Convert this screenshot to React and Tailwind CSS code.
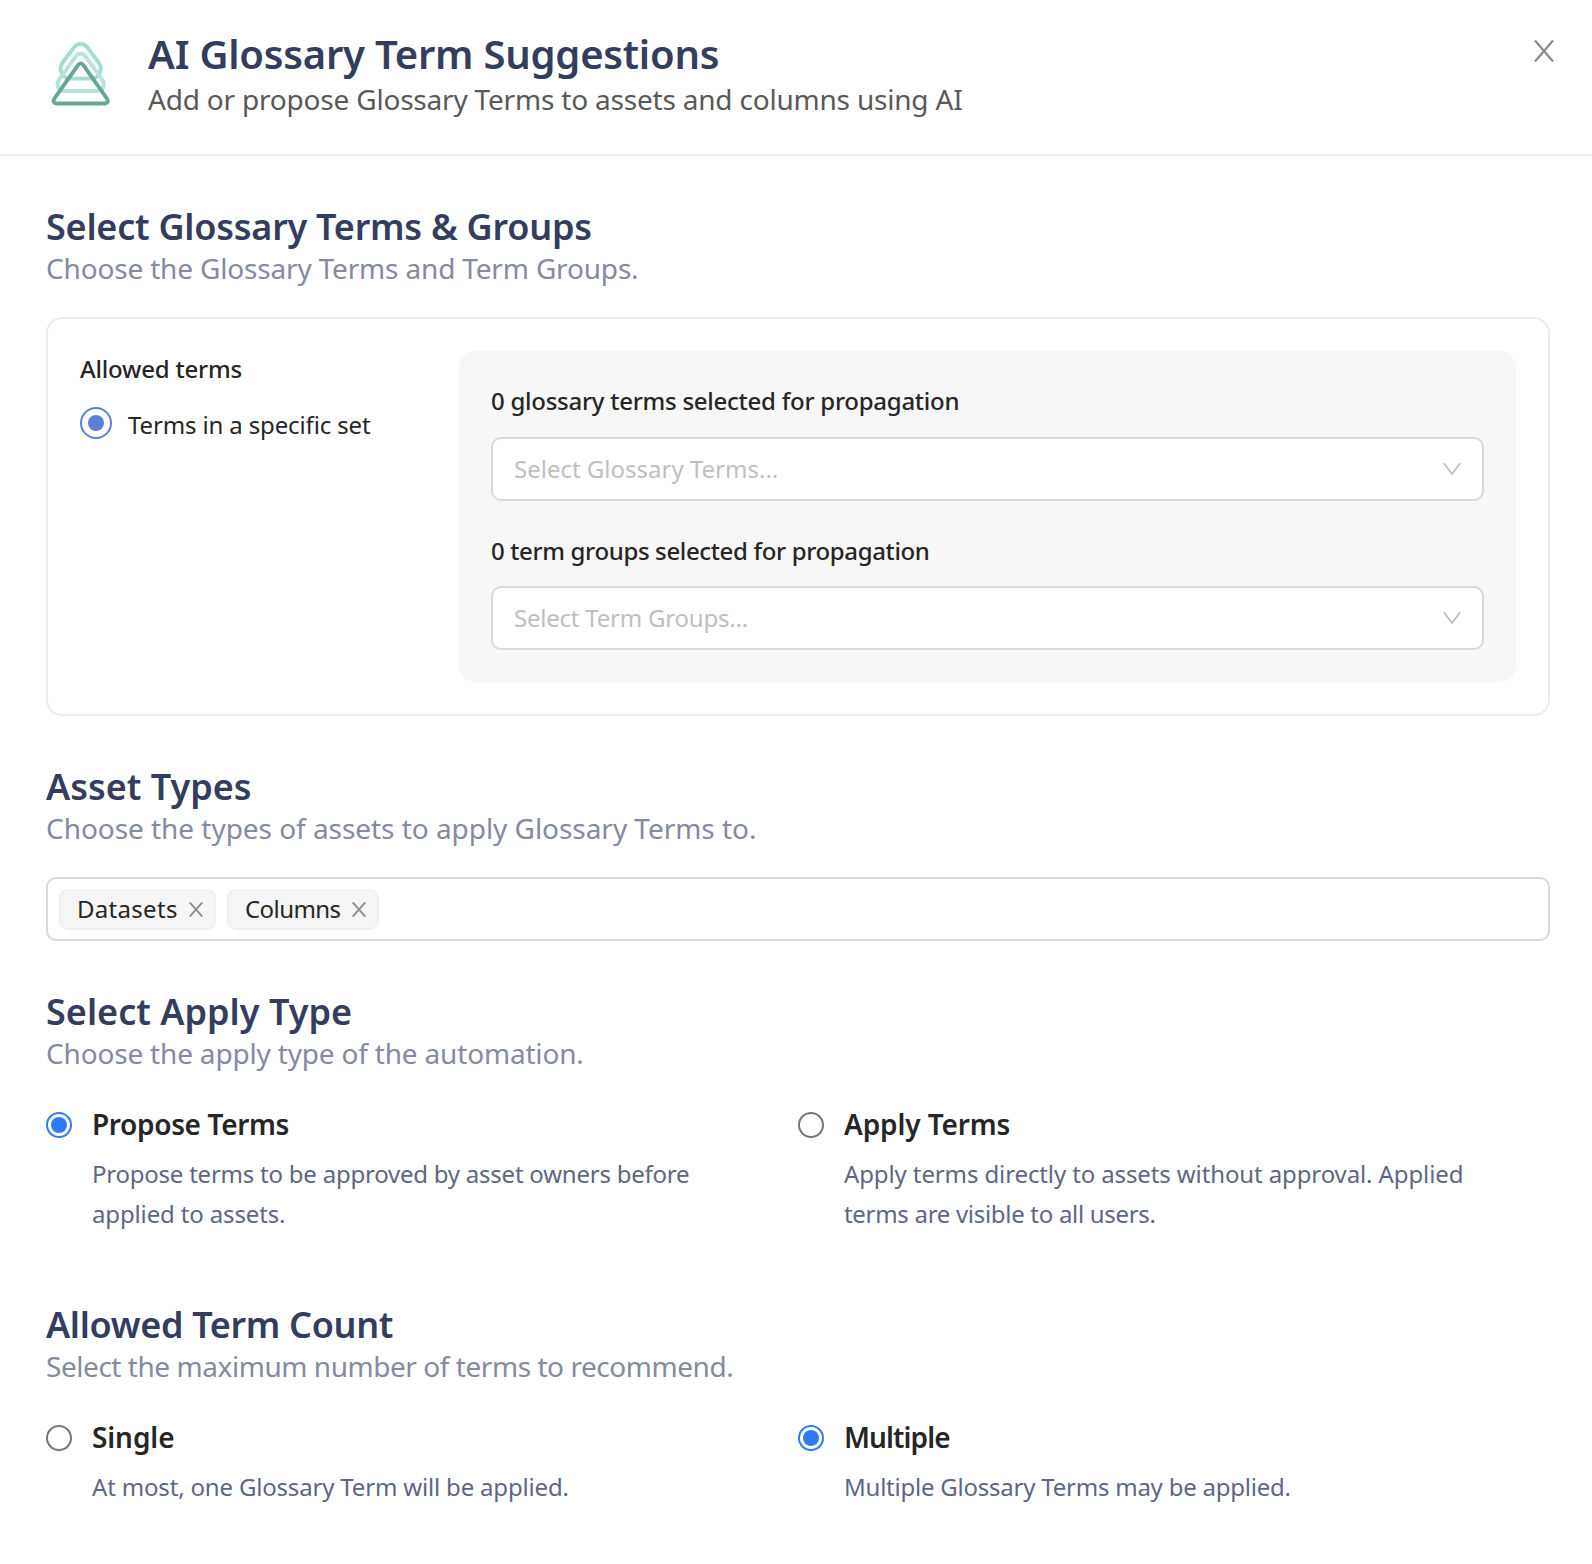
import React from "react";

function Logo() {
  return (
    <svg className="block h-[68px] w-[62px]" viewBox="12 12 186 204" fill="none" strokeWidth="11.5" strokeLinejoin="round">
      <path stroke="#a3dcd0" d="M84 34C94 20 114 20 124 34L157 78C165 89 166 103 160 113C155 123 148 128 138 128L70 128C60 128 53 123 48 113C42 103 43 89 51 78Z" />
      <path stroke="#b8e3da" d="M88 63C97 50 111 50 120 63L168 130C179 145 172 165 154 165L54 165C36 165 29 145 40 130Z" />
      <path stroke="#67a596" d="M97 86C101 81 107 81 111 86L183 188C188 196 184 202.500 176 202.500L32 202.500C24 202.500 20 196 25 188Z" />
    </svg>
  );
}

function Cross({ className, strokeWidth = 2.3 }) {
  return (
    <svg className={className} viewBox="0 0 20 22" fill="none" stroke="currentColor" strokeWidth={strokeWidth} preserveAspectRatio="none">
      <path d="M1 .5 19 21.5M19 .5 1 21.5" />
    </svg>
  );
}

function Section({ title, titleClass, subtitle, subtitleClass, className, children }) {
  return (
    <section className={className}>
      <h2 className={`pt-px text-[36px] font-semibold leading-[46px] text-[#343d5e] ${titleClass}`}>{title}</h2>
      <p className={`-mt-px text-[28px] leading-[38px] text-[#858aa1] ${subtitleClass}`}>{subtitle}</p>
      {children}
    </section>
  );
}

function SelectBox({ placeholder, className }) {
  return (
    <div className={`flex h-16 items-center justify-between rounded-[10px] border-2 border-[#d9d9d9] bg-white pl-[21px] pr-[21px] ${className}`}>
      <span className="pb-px text-[24px] leading-9 text-[#bfbfbf]">{placeholder}</span>
      <svg className="h-3 w-[18px]" viewBox="0 0 18 12" fill="none" stroke="#bfbfbf" strokeWidth="1.8">
        <path d="M.8 .2 9 11 17.2 .2" />
      </svg>
    </div>
  );
}

function Tag({ label, className }) {
  return (
    <span className={`flex h-[41px] items-center justify-between rounded-[9px] border-2 border-[#f0f0f0] bg-[#f5f5f5] pl-4 pr-[11px] text-[24px] text-[#262626] ${className}`}>
      {label}
      <Cross className="h-[15px] w-[14px] text-[#8c8c8c]" strokeWidth={2.6} />
    </span>
  );
}

function Option({ title, titleClass, checked, children, textClass }) {
  return (
    <label className="flex gap-5">
      <span className={`mt-[9px] flex size-[26px] shrink-0 items-center justify-center rounded-full border-2 ${checked ? "border-[#2f7af7]" : "border-[#767676]"}`}>
        {checked && <span className="size-4 rounded-full bg-[#2f7af7]" />}
      </span>
      <span>
        <span className={`block pt-px text-[28px] font-semibold leading-10 text-[#262626] ${titleClass}`}>{title}</span>
        <span className={`mt-[10px] block whitespace-nowrap text-[24px] leading-10 text-[#5f6685] ${textClass}`}>{children}</span>
      </span>
    </label>
  );
}

export default function App() {
  return (
    <div className="min-h-[1564px] w-full bg-white font-['Noto_Sans',sans-serif]">
      <header className="flex h-[156px] items-start border-b-2 border-[#f0f0f0] pl-[50px] pr-[38px]">
        <div className="pt-10"><Logo /></div>
        <div className="ml-9 flex-1 pt-7">
          <h1 className="text-[40px] font-semibold leading-[52px] tracking-[-0.22px] text-[#343d5e]">AI Glossary Term Suggestions</h1>
          <p className="-mt-px text-[28px] leading-10 tracking-[-0.2px] text-[#595959]">Add or propose Glossary Terms to assets and columns using AI</p>
        </div>
        <Cross className="mt-10 h-[22px] w-5 text-[#8c8c8c]" />
      </header>

      <main className="pl-[46px] pr-[42px] pt-[47px]">
        <Section title="Select Glossary Terms & Groups" titleClass="tracking-[-0.24px]" subtitle="Choose the Glossary Terms and Term Groups." subtitleClass="tracking-[-0.17px]">
          <div className="mt-[30px] flex rounded-[16px] border-2 border-[#ebebf2] p-8">
            <div className="w-[379px] text-[24px] leading-9 text-[#262626]">
              <div className="font-medium tracking-[-0.2px]">Allowed terms</div>
              <label className="mt-5 flex gap-4">
                <span className="flex size-8 items-center justify-center rounded-full border-2 border-[#5a81dd]">
                  <span className="size-4 rounded-full bg-[#5a81dd]" />
                </span>
                <span className="tracking-[-0.14px]">Terms in a specific set</span>
              </label>
            </div>
            <div className="flex-1 rounded-[16px] bg-[#f7f7f7] p-8 text-[24px] leading-9 text-[#262626]">
              <div className="font-medium tracking-[-0.26px]">0 glossary terms selected for propagation</div>
              <SelectBox className="mt-[18px]" placeholder="Select Glossary Terms..." />
              <div className="mt-8 font-medium tracking-[-0.358px]">0 term groups selected for propagation</div>
              <SelectBox className="mt-[17px] tracking-[-0.22px]" placeholder="Select Term Groups..." />
            </div>
          </div>
        </Section>

        <Section className="mt-[47px]" title="Asset Types" titleClass="tracking-[0px]" subtitle="Choose the types of assets to apply Glossary Terms to." subtitleClass="tracking-[-0.045px]">
          <div className="mt-[30px] flex h-16 items-center gap-[11px] rounded-[10px] border-2 border-[#d9d9d9] pl-[11px]">
            <Tag label="Datasets" className="w-[157px] tracking-[0.3px]" />
            <Tag label="Columns" className="w-[152px] tracking-[-0.58px]" />
          </div>
        </Section>

        <Section className="mt-[47px]" title="Select Apply Type" titleClass="tracking-[0.02px]" subtitle="Choose the apply type of the automation." subtitleClass="tracking-[-0.18px]">
          <div className="mt-[31px] grid grid-cols-2">
            <Option checked title="Propose Terms" titleClass="tracking-[-0.35px]" textClass="tracking-[-0.23px]">
              Propose terms to be approved by asset owners before<br />
              <span className="tracking-[-0.14px]">applied to assets.</span>
            </Option>
            <Option title="Apply Terms" titleClass="tracking-[-0.12px]" textClass="tracking-[-0.115px]">
              Apply terms directly to assets without approval. Applied<br />
              <span className="tracking-[-0.3px]">terms are visible to all users.</span>
            </Option>
          </div>
        </Section>

        <Section className="mt-[67px]" title="Allowed Term Count" titleClass="tracking-[-0.34px]" subtitle="Select the maximum number of terms to recommend." subtitleClass="tracking-[-0.45px]">
          <div className="mt-[31px] grid grid-cols-2">
            <Option title="Single" titleClass="tracking-[-0.1px]" textClass="tracking-[-0.175px]">At most, one Glossary Term will be applied.</Option>
            <Option checked title="Multiple" titleClass="tracking-[-0.9px]" textClass="tracking-[-0.23px]">Multiple Glossary Terms may be applied.</Option>
          </div>
        </Section>
      </main>
    </div>
  );
}
